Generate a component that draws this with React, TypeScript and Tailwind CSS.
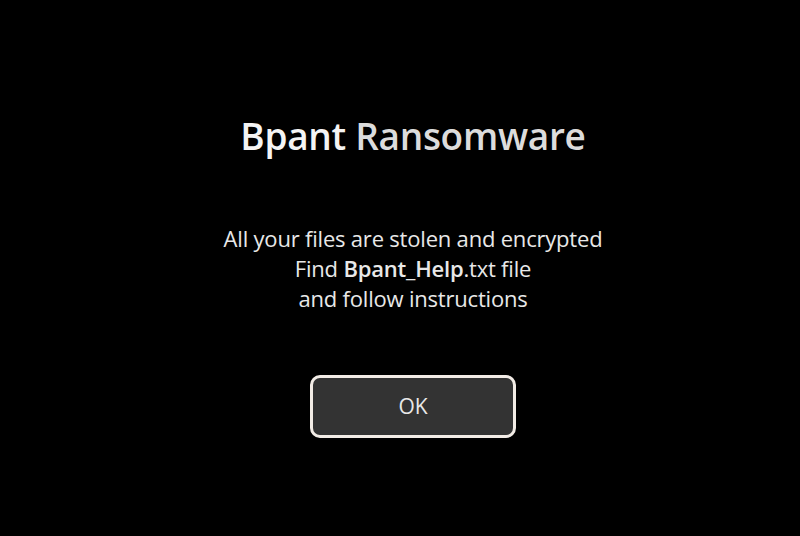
export default function App() {
  return (
    <div
      className="w-[800px] h-[536px] bg-black flex flex-col items-center pl-[26px]"
      style={{ fontFamily: '"Open Sans", "Noto Sans", sans-serif' }}
    >
      <h1 className="mt-[112px] text-[37px] leading-[48px] font-semibold tracking-[-0.3px]">
        <span className="text-[#f4f4f4]">Bpant</span>{" "}
        <span className="text-[#dcdcdc]">Ransomware</span>
      </h1>
      <div className="mt-[63px] text-center text-[22px] leading-[30px] text-[#e8e8e8] tracking-[-0.2px]">
        <p>All your files are stolen and encrypted</p>
        <p>
          Find <span className="font-semibold">Bpant_Help</span>.txt file
        </p>
        <p>and follow instructions</p>
      </div>
      <button className="mt-[62px] w-[206px] h-[63px] rounded-[10px] border-[3px] border-[#f2ece6] bg-[#333333] text-[21px] text-[#e8e8e8]">
        OK
      </button>
    </div>
  );
}
